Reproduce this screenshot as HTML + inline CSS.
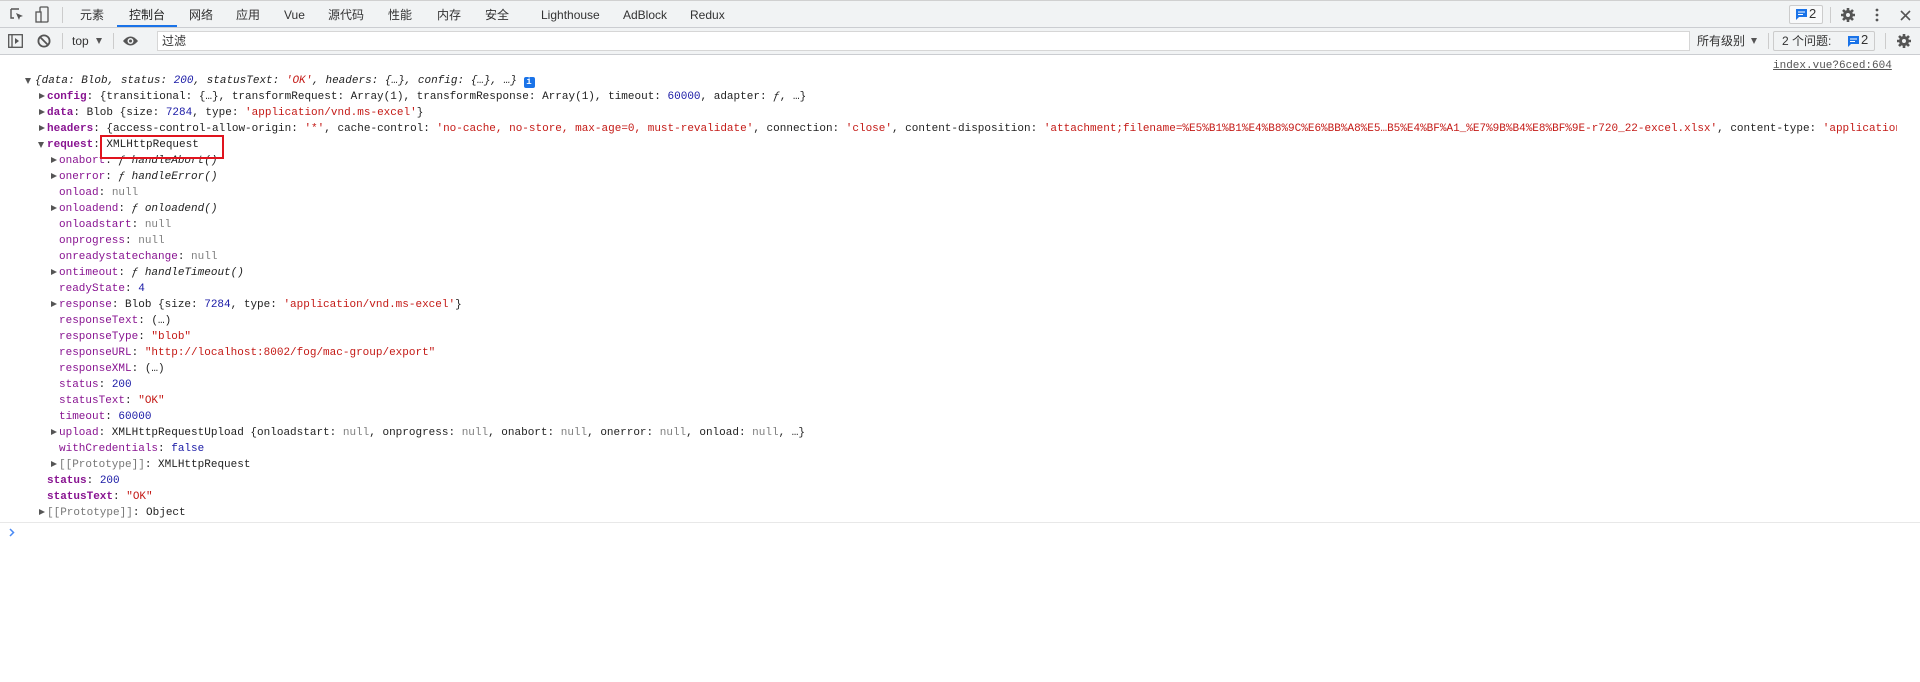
<!DOCTYPE html>
<html><head><meta charset="utf-8"><style>
*{margin:0;padding:0;box-sizing:border-box}
body{width:1920px;height:682px;background:#fff;position:relative;overflow:hidden;font-family:"Liberation Sans","Noto Sans CJK SC",sans-serif;color:#333}
.bar1{position:absolute;left:0;top:0;width:1920px;height:28px;background:#f1f3f4;border-top:1px solid #d0d0d0;border-bottom:1px solid #cbcdd1}
.bar2{position:absolute;left:0;top:28px;width:1920px;height:27px;background:#f1f3f4;border-bottom:1px solid #cbcdd1}
.t{position:absolute;top:7px;font-size:12px;line-height:14px;color:#333;white-space:nowrap}
.sep{position:absolute;width:1px;background:#ccc}
.ab{position:absolute}
.l{position:absolute;font-family:"Liberation Mono",monospace;font-size:11px;line-height:16px;height:16px;white-space:nowrap;color:#222}
.k{color:#881391}.b{font-weight:bold}
.n{color:#1a1aa6}.s{color:#c41a16}.g{color:#808080}.i{font-style:italic}
.ar{position:absolute;width:0;height:0;border-top:3.5px solid transparent;border-bottom:3.5px solid transparent;border-left:6px solid #555}
.ad{position:absolute;width:0;height:0;border-left:3.5px solid transparent;border-right:3.5px solid transparent;border-top:6px solid #555}
</style></head><body>
<div class="bar1">
<svg class="ab" style="left:9px;top:6px" width="16" height="16" viewBox="0 0 16 16"><path d="M2 2h8M2 2v9h3" stroke="#555" stroke-width="1.4" fill="none"/><path d="M7 6l7 3-3 1-1 3z" fill="#555"/></svg>
<svg class="ab" style="left:35px;top:5px" width="14" height="17" viewBox="0 0 14 17"><rect x="5" y="1" width="8" height="15" rx="1" stroke="#555" stroke-width="1.3" fill="none"/><rect x="1" y="6" width="5" height="10" stroke="#555" stroke-width="1.3" fill="#f1f3f4"/></svg>
<div class="sep" style="left:62px;top:6px;height:16px"></div>
<span class="t" style="left:80px">元素</span>
<span class="t" style="left:129px;color:#222">控制台</span>
<div class="ab" style="left:117px;top:24px;width:60px;height:2px;background:#1a73e8"></div>
<span class="t" style="left:189px">网络</span>
<span class="t" style="left:236px">应用</span>
<span class="t" style="left:284px">Vue</span>
<span class="t" style="left:328px">源代码</span>
<span class="t" style="left:388px">性能</span>
<span class="t" style="left:437px">内存</span>
<span class="t" style="left:485px">安全</span>
<span class="t" style="left:541px">Lighthouse</span>
<span class="t" style="left:623px">AdBlock</span>
<span class="t" style="left:690px">Redux</span>
<div class="ab" style="left:1789px;top:4px;width:34px;height:19px;border:1px solid #ccc;border-radius:2px;background:#f8f9fa"></div>
<svg class="ab" style="left:1796px;top:8px" width="11" height="11" viewBox="0 0 11 11"><path d="M0 0h11v8H3L0 11z" fill="#1a73e8"/><path d="M2 3h7M2 5.5h5" stroke="#fff" stroke-width="1"/></svg>
<span class="t" style="left:1809px;top:6px;font-size:13px">2</span>
<div class="sep" style="left:1830px;top:6px;height:16px"></div>
<svg class="ab" style="left:1841px;top:7px" width="14" height="14" viewBox="0 0 14 14"><circle cx="7" cy="7" r="5" fill="#555"/><path d="M7 0v14M0 7h14M2 2l10 10M12 2L2 12" stroke="#555" stroke-width="2.6"/><circle cx="7" cy="7" r="2" fill="#f1f3f4"/></svg>
<svg class="ab" style="left:1874px;top:6px" width="6" height="16"><circle cx="3" cy="3" r="1.4" fill="#555"/><circle cx="3" cy="8" r="1.4" fill="#555"/><circle cx="3" cy="13" r="1.4" fill="#555"/></svg>
<svg class="ab" style="left:1900px;top:9px" width="11" height="11"><path d="M1 1l9 9M10 1l-9 9" stroke="#555" stroke-width="1.6"/></svg>
</div>
<div class="bar2">
<svg class="ab" style="left:8px;top:6px" width="15" height="14"><rect x="0.7" y="0.7" width="13.6" height="12.6" stroke="#555" stroke-width="1.3" fill="none"/><path d="M4 1v12" stroke="#555" stroke-width="1.3"/><path d="M7 4l4 3-4 3z" fill="#555"/></svg>
<svg class="ab" style="left:37px;top:6px" width="14" height="14"><circle cx="7" cy="7" r="5.6" stroke="#555" stroke-width="1.8" fill="none"/><path d="M3 3l8 8" stroke="#555" stroke-width="1.8"/></svg>
<div class="sep" style="left:62px;top:5px;height:16px"></div>
<span class="t" style="left:72px;top:6px">top</span>
<div class="ad" style="left:96px;top:10px"></div>
<div class="sep" style="left:113px;top:5px;height:16px"></div>
<svg class="ab" style="left:122px;top:7px" width="17" height="12"><path d="M1 6Q8.5-3 16 6Q8.5 15 1 6z" fill="#555"/><circle cx="8.5" cy="6" r="3" fill="#f1f3f4"/><circle cx="8.5" cy="6" r="1.5" fill="#555"/></svg>
<div class="ab" style="left:157px;top:3px;width:1533px;height:20px;background:#fff;border:1px solid #d6d6d6"></div>
<span class="t" style="left:162px;top:6px">过滤</span>
<span class="t" style="left:1697px;top:6px">所有级别</span>
<div class="ad" style="left:1751px;top:10px"></div>
<div class="sep" style="left:1768px;top:5px;height:16px"></div>
<div class="ab" style="left:1773px;top:3px;width:102px;height:20px;border:1px solid #ccc;border-radius:2px"></div>
<span class="t" style="left:1782px;top:6px">2 个问题:</span>
<svg class="ab" style="left:1848px;top:8px" width="11" height="11" viewBox="0 0 11 11"><path d="M0 0h11v8H3L0 11z" fill="#1a73e8"/><path d="M2 3h7M2 5.5h5" stroke="#fff" stroke-width="1"/></svg>
<span class="t" style="left:1861px;top:5px;font-size:13px">2</span>
<div class="sep" style="left:1885px;top:5px;height:16px"></div>
<svg class="ab" style="left:1897px;top:6px" width="14" height="14" viewBox="0 0 14 14"><circle cx="7" cy="7" r="5" fill="#555"/><path d="M7 0v14M0 7h14M2 2l10 10M12 2L2 12" stroke="#555" stroke-width="2.6"/><circle cx="7" cy="7" r="2" fill="#f1f3f4"/></svg>
</div>

<div class="l" style="left:1773px;top:58px;color:#555;text-decoration:underline">index.vue?6ced:604</div>

<div class="ad" style="left:25px;top:78px"></div>
<div class="l i" style="left:35px;top:73px">{data: Blob, status: <span class="n">200</span>, statusText: <span class="s">'OK'</span>, headers: {…}, config: {…}, …} <span style="display:inline-block;width:11px;height:11px;background:#1a73e8;border-radius:2px;color:#fff;font-size:9px;line-height:11px;text-align:center;font-style:normal;font-weight:bold;vertical-align:-1px">i</span></div>

<div class="ar" style="left:39px;top:93px"></div>
<div class="l" style="left:47px;top:89px"><span class="k b">config</span>: {transitional: {…}, transformRequest: Array(1), transformResponse: Array(1), timeout: <span class="n">60000</span>, adapter: <i>ƒ</i>, …}</div>
<div class="ar" style="left:39px;top:109px"></div>
<div class="l" style="left:47px;top:105px"><span class="k b">data</span>: Blob {size: <span class="n">7284</span>, type: <span class="s">'application/vnd.ms-excel'</span>}</div>
<div class="ar" style="left:39px;top:125px"></div>
<div class="l" style="left:47px;top:121px;width:1850px;overflow:hidden"><span class="k b">headers</span>: {access-control-allow-origin: <span class="s">'*'</span>, cache-control: <span class="s">'no-cache, no-store, max-age=0, must-revalidate'</span>, connection: <span class="s">'close'</span>, content-disposition: <span class="s">'attachment;filename=%E5%B1%B1%E4%B8%9C%E6%BB%A8%E5…B5%E4%BF%A1_%E7%9B%B4%E8%BF%9E-r720_22-excel.xlsx'</span>, content-type: <span class="s">'application/vnd.ms-excel'</span></div>
<div class="ad" style="left:38px;top:142px"></div>
<div class="l" style="left:47px;top:137px"><span class="k b">request</span>: XMLHttpRequest</div>

<div class="ar" style="left:51px;top:157px"></div><div class="l" style="left:59px;top:153px"><span class="k">onabort</span>: <i>ƒ handleAbort()</i></div>
<div class="ar" style="left:51px;top:173px"></div><div class="l" style="left:59px;top:169px"><span class="k">onerror</span>: <i>ƒ handleError()</i></div>
<div class="l" style="left:59px;top:185px"><span class="k">onload</span>: <span class="g">null</span></div>
<div class="ar" style="left:51px;top:205px"></div><div class="l" style="left:59px;top:201px"><span class="k">onloadend</span>: <i>ƒ onloadend()</i></div>
<div class="l" style="left:59px;top:217px"><span class="k">onloadstart</span>: <span class="g">null</span></div>
<div class="l" style="left:59px;top:233px"><span class="k">onprogress</span>: <span class="g">null</span></div>
<div class="l" style="left:59px;top:249px"><span class="k">onreadystatechange</span>: <span class="g">null</span></div>
<div class="ar" style="left:51px;top:269px"></div><div class="l" style="left:59px;top:265px"><span class="k">ontimeout</span>: <i>ƒ handleTimeout()</i></div>
<div class="l" style="left:59px;top:281px"><span class="k">readyState</span>: <span class="n">4</span></div>
<div class="ar" style="left:51px;top:301px"></div><div class="l" style="left:59px;top:297px"><span class="k">response</span>: Blob {size: <span class="n">7284</span>, type: <span class="s">'application/vnd.ms-excel'</span>}</div>
<div class="l" style="left:59px;top:313px"><span class="k">responseText</span>:  (…)</div>
<div class="l" style="left:59px;top:329px"><span class="k">responseType</span>: <span class="s">"blob"</span></div>
<div class="l" style="left:59px;top:345px"><span class="k">responseURL</span>: <span class="s">"http://localhost:8002/fog/mac-group/export"</span></div>
<div class="l" style="left:59px;top:361px"><span class="k">responseXML</span>:  (…)</div>
<div class="l" style="left:59px;top:377px"><span class="k">status</span>: <span class="n">200</span></div>
<div class="l" style="left:59px;top:393px"><span class="k">statusText</span>: <span class="s">"OK"</span></div>
<div class="l" style="left:59px;top:409px"><span class="k">timeout</span>: <span class="n">60000</span></div>
<div class="ar" style="left:51px;top:429px"></div><div class="l" style="left:59px;top:425px"><span class="k">upload</span>: XMLHttpRequestUpload {onloadstart: <span class="g">null</span>, onprogress: <span class="g">null</span>, onabort: <span class="g">null</span>, onerror: <span class="g">null</span>, onload: <span class="g">null</span>, …}</div>
<div class="l" style="left:59px;top:441px"><span class="k">withCredentials</span>: <span class="n">false</span></div>
<div class="ar" style="left:51px;top:461px"></div><div class="l" style="left:59px;top:457px"><span style="color:#777">[[Prototype]]</span>: XMLHttpRequest</div>

<div class="l" style="left:47px;top:473px"><span class="k b">status</span>: <span class="n">200</span></div>
<div class="l" style="left:47px;top:489px"><span class="k b">statusText</span>: <span class="s">"OK"</span></div>
<div class="ar" style="left:39px;top:509px"></div><div class="l" style="left:47px;top:505px"><span style="color:#777">[[Prototype]]</span>: Object</div>

<div class="ab" style="left:100px;top:135px;width:124px;height:24px;border:2px solid #e0141e"></div>
<div class="ab" style="left:0;top:522px;width:1920px;height:1px;background:#e8e8e8"></div>
<svg class="ab" style="left:9px;top:528px" width="6" height="9"><path d="M1 1l3.5 3.5L1 8" stroke="#4a8af4" stroke-width="1.5" fill="none"/></svg>
</body></html>
